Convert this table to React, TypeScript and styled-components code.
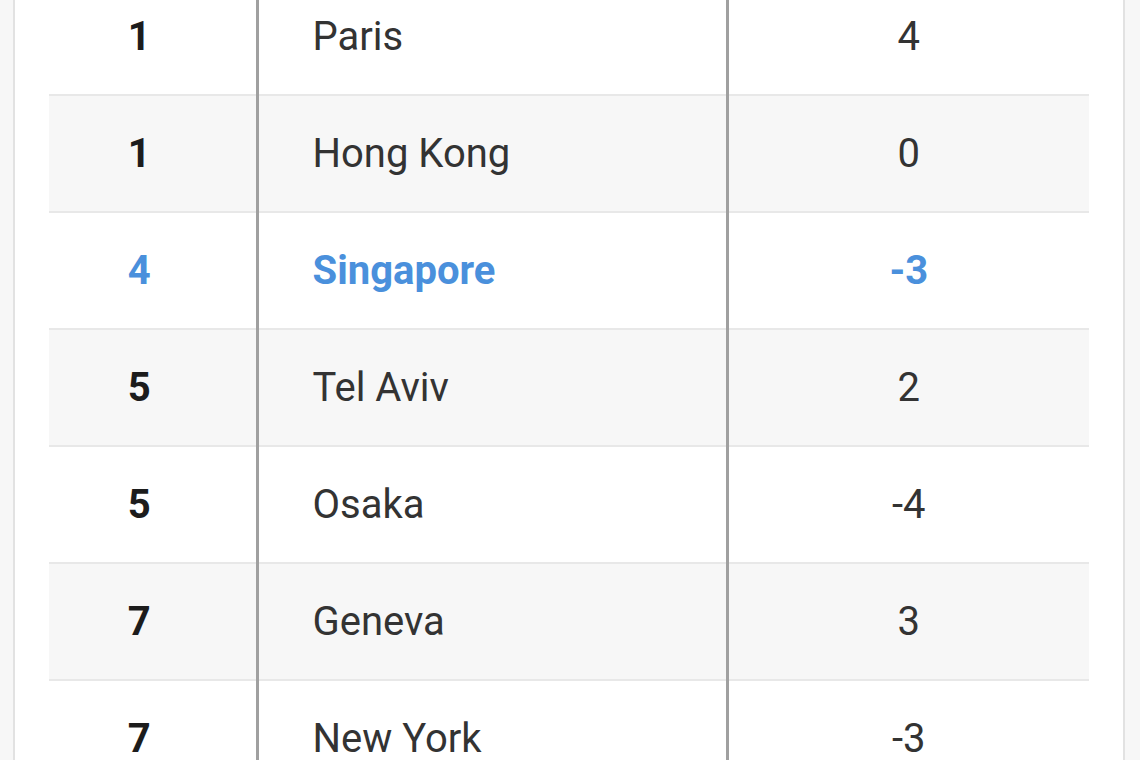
import React from 'react';
import styled, { createGlobalStyle } from 'styled-components';

const GlobalStyle = createGlobalStyle`
  html, body {
    margin: 0;
    padding: 0;
    background: #f7f7f7;
    overflow: hidden;
  }
  body {
    font-family: Roboto, "Liberation Sans", sans-serif;
  }
`;

const Page = styled.div`
  height: 760px;
  padding: 0 15px 0 13px;
  overflow: hidden;
`;

const Card = styled.div`
  margin-top: -22px;
  background: #ffffff;
  border-left: 2px solid #e2e2e2;
  border-right: 2px solid #e2e2e2;
  padding: 0 34px 0 34px;
  height: 900px;
`;

const Table = styled.table`
  width: 100%;
  border-collapse: collapse;
  table-layout: fixed;
`;

const Row = styled.tr<{ $striped: boolean }>`
  height: 117px;
  background: ${({ $striped }) => ($striped ? '#f7f7f7' : '#ffffff')};
  border-bottom: 2px solid #e8e8e8;
`;

const Cell = styled.td<{ $active: boolean }>`
  box-sizing: border-box;
  padding: 0;
  font-size: 40px;
  color: ${({ $active }) => ($active ? '#4a90dc' : '#333333')};
  font-weight: ${({ $active }) => ($active ? 700 : 400)};
  vertical-align: middle;
`;

const RankCell = styled(Cell)`
  width: 208px;
  text-align: center;
  padding-right: 26px;
  font-weight: 700;
  color: ${({ $active }) => ($active ? '#4a90dc' : '#1c1c1c')};
  border-right: 3px solid #a0a0a0;
`;

const CityCell = styled(Cell)`
  width: 470px;
  padding-left: 54px;
  border-right: 3px solid #a0a0a0;
`;

const ChangeCell = styled(Cell)`
  text-align: center;
`;

const rows = [
  { rank: 1, city: 'Paris', change: '4' },
  { rank: 1, city: 'Hong Kong', change: '0' },
  { rank: 4, city: 'Singapore', change: '-3', active: true },
  { rank: 5, city: 'Tel Aviv', change: '2' },
  { rank: 5, city: 'Osaka', change: '-4' },
  { rank: 7, city: 'Geneva', change: '3' },
  { rank: 7, city: 'New York', change: '-3' },
];

export default function App() {
  return (
    <>
      <GlobalStyle />
      <Page>
        <Card>
          <Table>
            <tbody>
              {rows.map((r, i) => (
                <Row key={r.city} $striped={i % 2 === 1}>
                  <RankCell $active={!!r.active}>{r.rank}</RankCell>
                  <CityCell $active={!!r.active}>{r.city}</CityCell>
                  <ChangeCell $active={!!r.active}>{r.change}</ChangeCell>
                </Row>
              ))}
            </tbody>
          </Table>
        </Card>
      </Page>
    </>
  );
}
